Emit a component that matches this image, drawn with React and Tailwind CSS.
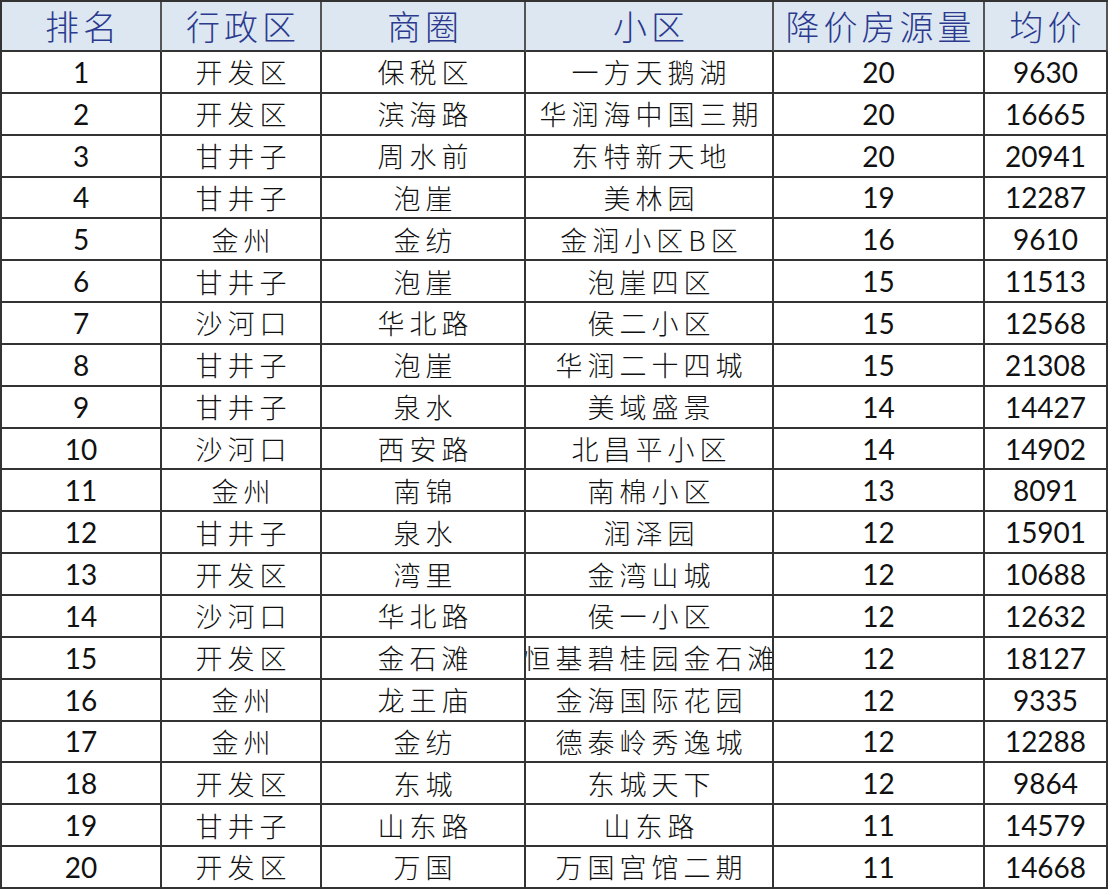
import React from "react";

const rows = [
  ["1", "开发区", "保税区", "一方天鹅湖", "20", "9630"],
  ["2", "开发区", "滨海路", "华润海中国三期", "20", "16665"],
  ["3", "甘井子", "周水前", "东特新天地", "20", "20941"],
  ["4", "甘井子", "泡崖", "美林园", "19", "12287"],
  ["5", "金州", "金纺", "金润小区B区", "16", "9610"],
  ["6", "甘井子", "泡崖", "泡崖四区", "15", "11513"],
  ["7", "沙河口", "华北路", "侯二小区", "15", "12568"],
  ["8", "甘井子", "泡崖", "华润二十四城", "15", "21308"],
  ["9", "甘井子", "泉水", "美域盛景", "14", "14427"],
  ["10", "沙河口", "西安路", "北昌平小区", "14", "14902"],
  ["11", "金州", "南锦", "南棉小区", "13", "8091"],
  ["12", "甘井子", "泉水", "润泽园", "12", "15901"],
  ["13", "开发区", "湾里", "金湾山城", "12", "10688"],
  ["14", "沙河口", "华北路", "侯一小区", "12", "12632"],
  ["15", "开发区", "金石滩", "恒基碧桂园金石滩", "12", "18127"],
  ["16", "金州", "龙王庙", "金海国际花园", "12", "9335"],
  ["17", "金州", "金纺", "德泰岭秀逸城", "12", "12288"],
  ["18", "开发区", "东城", "东城天下", "12", "9864"],
  ["19", "甘井子", "山东路", "山东路", "11", "14579"],
  ["20", "开发区", "万国", "万国宫馆二期", "11", "14668"],
];

const headers = ["排名", "行政区", "商圈", "小区", "降价房源量", "均价"];
const widths = ["w-[160px]", "w-[160px]", "w-[204px]", "w-[248px]", "w-[211px]", "w-[123px]"];

const cjk = { fontFamily: '"Noto Sans CJK SC", "Noto Sans", sans-serif' };
const num = { fontFamily: 'Lato, "Noto Sans", sans-serif' };

export default function App() {
  return (
    <div className="w-[1108px] h-[890px] bg-white overflow-hidden">
      <div className="w-[1108px] border-l-2 border-t-2 border-[#333]">
        <div className="flex">
          {headers.map((h, i) => (
            <div
              key={i}
              className={`${widths[i]} h-[50px] shrink-0 bg-[#dde7f2] border-r-2 border-b-2 border-r-[#555] border-b-[#333] flex items-center justify-center text-[34px] font-light tracking-[4px] pl-[4px] text-[#2b3a8e] leading-none`}
              style={cjk}
            >
              {h}
            </div>
          ))}
        </div>
        {rows.map((r, ri) => (
          <div key={ri} className="flex">
            {r.map((c, ci) => {
              const isNum = ci === 0 || ci === 4 || ci === 5;
              return (
                <div
                  key={ci}
                  className={`${widths[ci]} h-[41.85px] shrink-0 border-r-2 border-b-2 border-[#333] flex items-center justify-center overflow-hidden whitespace-nowrap leading-none text-[#111] ${
                    isNum ? "text-[28px] font-normal" : "text-[27px] font-light tracking-[5px] pl-[5px]"
                  }`}
                  style={isNum ? num : cjk}
                >
                  <span className="shrink-0">{c}</span>
                </div>
              );
            })}
          </div>
        ))}
      </div>
    </div>
  );
}
